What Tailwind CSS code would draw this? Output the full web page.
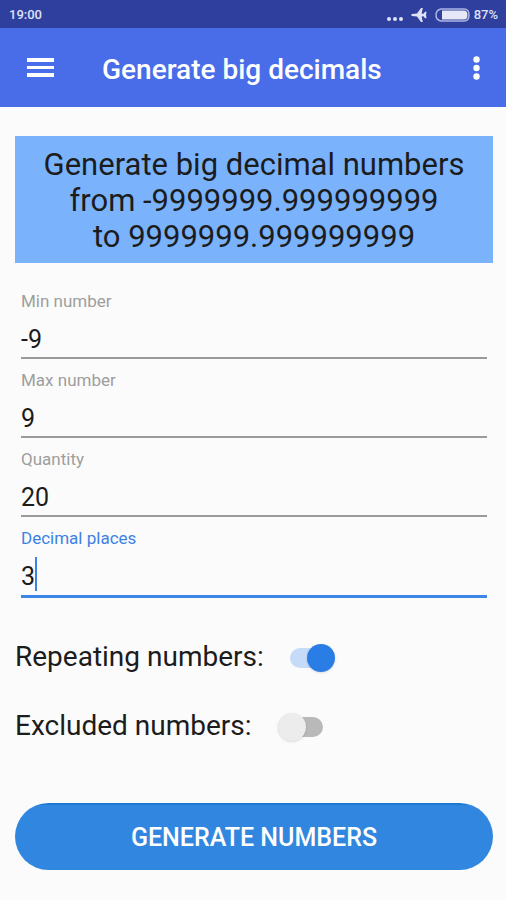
<!DOCTYPE html>
<html lang="en">

<head>
    <meta charset="UTF-8">
    <meta name="viewport" content="width=device-width, initial-scale=1.0">
    <title>Generate big decimals</title>
    <script src="https://cdn.jsdelivr.net/npm/@tailwindcss/browser@4"></script>
</head>

<body class="min-h-screen bg-[#fbfbfb] font-[Roboto,sans-serif] text-[#1c1c1c]">

    <!-- Status bar -->
    <div class="flex h-7 items-center justify-between bg-[#2f3f9e] pt-px pr-2 pl-[9px] text-[13px] font-medium text-[#dfe2f6]">
        <span>19:00</span>
        <div class="flex items-center gap-1">
            <svg class="mt-2 h-1 w-4" viewBox="0 0 16 4" fill="currentColor">
                <circle cx="2" cy="2" r="2" />
                <circle cx="8" cy="2" r="2" />
                <circle cx="14" cy="2" r="2" />
            </svg>
            <svg class="ml-1 h-4 w-4" viewBox="0 0 16 16" fill="currentColor">
                <path d="M0 8l1-1 5-.6L10 1h1.800L10.600 6.500l1.900.2 1.500-2h1.500L15 8l.5 3.300H14l-1.500-2-1.900.2L11.800 15H10L6 9.600 1 9z" />
            </svg>
            <svg class="ml-1 h-[14px] w-[35px]" viewBox="0 0 35 14" fill="none">
                <path d="M6 1h23q5 0 5 6t-5 6H6Q1 12 1 7T6 1z" stroke="#aeb5e2" stroke-width="1.500" stroke-linejoin="round" />
                <path d="M7 2.500h22q3.500 0 3.500 4.500t-3.500 4.500H7z" fill="#e6e8f8" />
            </svg>
            <span>87%</span>
        </div>
    </div>

    <!-- App bar -->
    <header class="flex h-[79px] items-center bg-[#496de8] pr-[18px] pl-[27px] text-white">
        <button type="button" aria-label="Menu">
            <svg class="h-5 w-[27px]" viewBox="0 0 27 20" fill="currentColor">
                <path d="M0 0h27v4H0zM0 8h27v3H0zM0 15h27v4H0z" />
            </svg>
        </button>
        <h1 class="ml-12 grow pt-1 text-[28px] leading-8 font-medium">Generate big decimals</h1>
        <button type="button" aria-label="More options" class="px-2">
            <svg class="h-6 w-[7px]" viewBox="0 0 7 24" fill="currentColor">
                <circle cx="3.500" cy="3.500" r="3.200" />
                <circle cx="3.500" cy="12" r="3.200" />
                <circle cx="3.500" cy="20.500" r="3.200" />
            </svg>
        </button>
    </header>

    <main class="pt-[29px] pr-[13px] pl-[15px]">
        <p class="bg-[#7ab3fc] pt-[11px] pb-2 text-center text-[31px] leading-9">
            Generate big decimal numbers<br>
            from -9999999.999999999<br>
            to 9999999.999999999
        </p>

        <form>
            <!-- Number fields -->
            <div class="px-[6px] pt-[27px]">
                <div class="h-[79px]">
                    <label for="min" class="block text-[17px] leading-[22px] text-[#9e9e9e]">Min number</label>
                    <input type="text" id="min" value="-9" class="block h-[47px] w-full border-b-2 border-[#9a9a9a] pt-[9px] text-[25px] outline-none">
                </div>
                <div class="h-[79px]">
                    <label for="max" class="block text-[17px] leading-[22px] text-[#9e9e9e]">Max number</label>
                    <input type="text" id="max" value="9" class="block h-[47px] w-full border-b-2 border-[#9a9a9a] pt-[9px] text-[25px] outline-none">
                </div>
                <div class="h-[79px]">
                    <label for="quantity" class="block text-[17px] leading-[22px] text-[#9e9e9e]">Quantity</label>
                    <input type="text" id="quantity" value="20" class="block h-[47px] w-full border-b-2 border-[#9a9a9a] pt-[9px] text-[25px] outline-none">
                </div>
                <div class="h-[79px]">
                    <label for="places" class="block text-[17px] leading-[22px] text-[#3b82e6]">Decimal places</label>
                    <div class="flex h-[49px] items-end border-b-3 border-[#3b86e6]">
                        <input type="text" id="places" value="3" class="field-sizing-content h-full pt-[9px] text-[25px] caret-transparent outline-none">
                        <span class="mb-1 h-[34px] w-[2px] bg-[#3b82e6]"></span>
                    </div>
                </div>
            </div>

            <!-- Switches -->
            <div class="mt-[33px] flex h-[69px] items-start gap-[26px]">
                <label for="repeating" class="text-[28px] leading-9">Repeating numbers:</label>
                <input type="checkbox" id="repeating" checked class="relative mt-[5px] h-7 w-[45px] appearance-none before:absolute before:inset-x-0 before:top-1 before:h-5 before:rounded-full before:bg-[#b9b9b9] after:absolute after:top-0 after:left-0 after:size-7 after:rounded-full after:bg-[#ececec] after:shadow checked:before:bg-[#c5dbf8] checked:after:left-[17px] checked:after:bg-[#2b7de6]">
            </div>
            <div class="flex h-[69px] items-start gap-[26px]">
                <label for="excluded" class="text-[28px] leading-9">Excluded numbers:</label>
                <input type="checkbox" id="excluded" class="relative mt-[5px] h-7 w-[45px] appearance-none before:absolute before:inset-x-0 before:top-1 before:h-5 before:rounded-full before:bg-[#b9b9b9] after:absolute after:top-0 after:left-0 after:size-7 after:rounded-full after:bg-[#ececec] after:shadow checked:before:bg-[#c5dbf8] checked:after:left-[17px] checked:after:bg-[#2b7de6]">
            </div>

            <button type="button" class="mt-[26px] h-[67px] w-full rounded-full bg-[linear-gradient(#1b79d2_2px,#3187df_2px)] pt-[2px] text-[25px] font-medium text-white">GENERATE NUMBERS</button>
        </form>
    </main>

</body>

</html>
